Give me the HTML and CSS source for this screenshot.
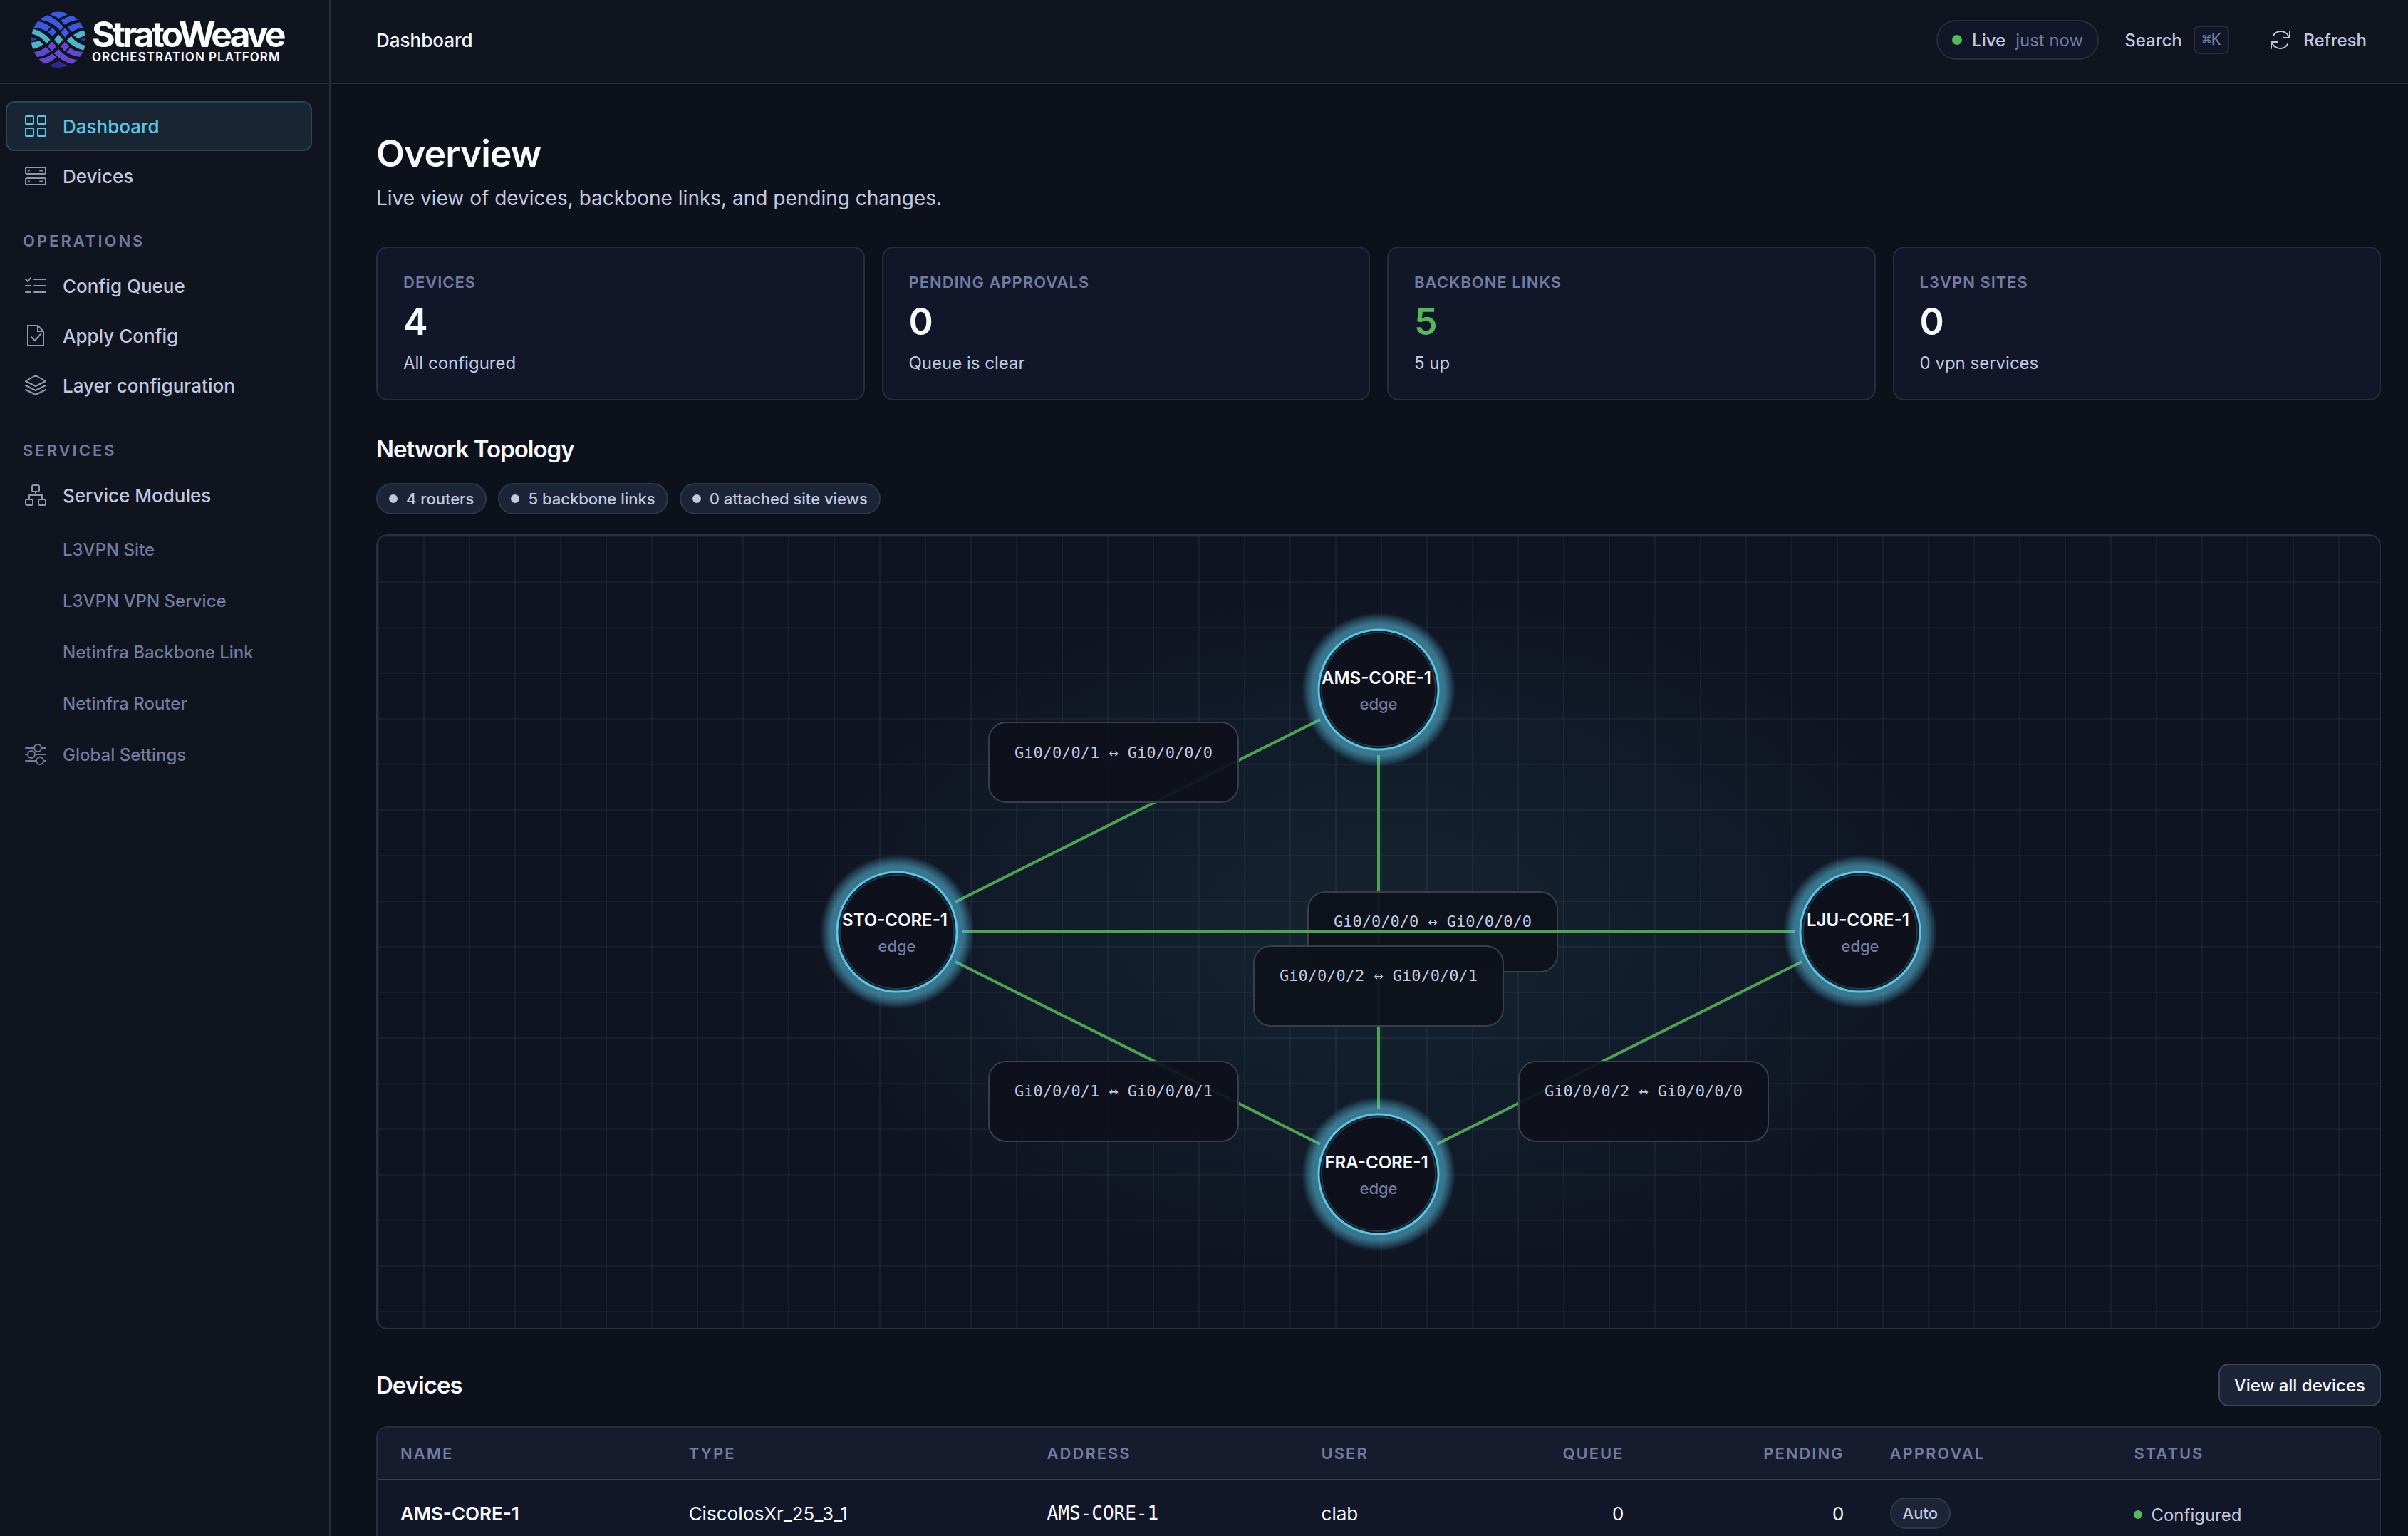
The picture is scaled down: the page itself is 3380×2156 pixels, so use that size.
FILE: index.html
```html
<!DOCTYPE html>
<html lang="en">
<head>
<meta charset="utf-8">
<title>StratoWeave – Dashboard</title>
<link rel="stylesheet" href="styles.css">
</head>
<body>
<div class="shell">
  <aside class="sidebar">
    <a class="brand" href="#" aria-label="StratoWeave Orchestration Platform">
      <svg class="brand-mark" viewBox="16 15 234 240" aria-hidden="true">
        <defs>
          <clipPath id="disc"><ellipse cx="133" cy="134" rx="115" ry="118"/></clipPath>
        </defs>
        <g clip-path="url(#disc)">
          <g fill="#3a5ae6">
            <path d="M94 26Q134 6 174 26L135 44Z"/>
            <path d="M60 44L88 31Q122 44 155 80L142 96Q108 58 60 50Z"/>
            <path d="M143 52Q166 37 196 32L216 50Q182 54 159 71Z"/>
            <path d="M44 56Q76 60 99 80L84 100Q60 84 26 84Z"/>
            <path d="M228 60L240 84Q212 86 190 102L171 81Q196 64 228 60Z"/>
            <path d="M108 83L125 102L108 121L90 102Z"/>
            <path d="M160 85L178 104L160 125L143 104Z"/>
          </g>
          <g fill="#4fb3c9">
            <path d="M28 89Q68 98 99 135L83 151Q55 115 18 109Z"/>
            <path d="M18 146Q38 144 52 138L69 154Q50 170 24 174Z"/>
            <path d="M246 94L250 116Q230 121 216 131L196 115Q216 99 246 94Z"/>
            <path d="M186 119Q215 156 250 158L242 179Q202 172 168 138Z"/>
            <path d="M133 112L152 134L134 156L116 134Z"/>
          </g>
          <g fill="#6446d0">
            <path d="M106 142L125 162L106 182L88 162Z"/>
            <path d="M160 143L179 162L160 184L142 162Z"/>
            <path d="M30 186Q62 182 80 164L100 184Q76 204 40 208Z"/>
            <path d="M50 217Q84 212 107 193L125 208Q104 228 72 238Z"/>
            <path d="M133 173Q170 216 216 220L196 238Q150 228 114 192Z"/>
            <path d="M183 169Q206 186 238 186L228 208Q192 204 167 187Z"/>
          </g>
          <path fill="#33268c" d="M90 246L134 224L178 246Q134 264 90 246Z"/>
          <path fill="#2b3fa8" d="M16 122L43 133L16 144ZM252 124L225 134L252 144Z"/>
        </g>
      </svg>
      <span class="brand-text">
        <span class="brand-name">StratoWeave</span>
        <span class="brand-tag">ORCHESTRATION PLATFORM</span>
      </span>
    </a>
    <nav class="nav">
      <a class="nav-item active" href="#">
        <svg class="icon" viewBox="0 0 32 32"><rect x="2" y="2" width="11" height="11" rx="1"/><rect x="19" y="2" width="11" height="11" rx="1"/><rect x="2" y="19" width="11" height="11" rx="1"/><rect x="19" y="19" width="11" height="11" rx="1"/></svg>
        Dashboard</a>
      <a class="nav-item" href="#">
        <svg class="icon" viewBox="0 0 32 32"><rect x="2" y="4" width="28" height="9" rx="2"/><rect x="2" y="19" width="28" height="9" rx="2"/><path d="M6 8.500h1M22 8.500h4M6 23.500h1M22 23.500h4"/></svg>
        Devices</a>
      <h2 class="nav-label">Operations</h2>
      <a class="nav-item" href="#">
        <svg class="icon" viewBox="0 0 32 32"><path d="M2 7l3 3 4-5M14 7h16M2 16h7M14 16h16M2 25h7M14 25h16"/></svg>
        Config Queue</a>
      <a class="nav-item" href="#">
        <svg class="icon sharp" viewBox="0 0 32 32"><path d="M5 2h14l8 8v20H5zM19 2v8h8M10 18l5 5 8-9"/></svg>
        Apply Config</a>
      <a class="nav-item" href="#">
        <svg class="icon" viewBox="0 0 32 32"><path d="M16 2l14 8-14 7-14-7zM2 16l14 7 14-7M2 22l14 7 14-7"/></svg>
        Layer configuration</a>
      <h2 class="nav-label">Services</h2>
      <a class="nav-item" href="#">
        <svg class="icon" viewBox="0 0 32 32"><rect x="11" y="2" width="10" height="9" rx="2"/><rect x="2" y="22" width="10" height="8" rx="2"/><rect x="20" y="22" width="10" height="8" rx="2"/><path d="M16 11v5M7 22v-6h18v6"/></svg>
        Service Modules</a>
      <div class="subnav">
        <a class="nav-sub" href="#">L3VPN Site</a>
        <a class="nav-sub" href="#">L3VPN VPN Service</a>
        <a class="nav-sub" href="#">Netinfra Backbone Link</a>
        <a class="nav-sub" href="#">Netinfra Router</a>
        <a class="nav-sub with-icon" href="#">
          <svg class="icon" viewBox="0 0 32 32"><circle cx="19" cy="7" r="5"/><circle cx="10" cy="16" r="5"/><circle cx="22" cy="25" r="5"/><path d="M2 7h12M24 7h6M2 16h3M15 16h15M2 25h15M27 25h3"/></svg>
          Global Settings</a>
      </div>
    </nav>
  </aside>

  <div class="page">
    <header class="topbar">
      <span class="crumb">Dashboard</span>
      <div class="actions">
        <div class="live"><span class="dot"></span><span>Live</span><span class="muted">just now</span></div>
        <button class="action search" type="button">Search <kbd>⌘K</kbd></button>
        <button class="action refresh" type="button">
          <svg class="icon" viewBox="0 0 32 32"><path d="M6 10A12 12 0 0 1 28 13M29 4v9H20M26 22A12 12 0 0 1 4 19M3 28V19h9"/></svg>
          Refresh</button>
      </div>
    </header>

    <main class="content">
      <h1>Overview</h1>
      <p class="lead">Live view of devices, backbone links, and pending changes.</p>

      <section class="stats">
        <article class="card"><h3>Devices</h3><p class="value">4</p><p class="note">All configured</p></article>
        <article class="card"><h3>Pending approvals</h3><p class="value">0</p><p class="note">Queue is clear</p></article>
        <article class="card"><h3>Backbone links</h3><p class="value good">5</p><p class="note">5 up</p></article>
        <article class="card"><h3>L3VPN sites</h3><p class="value">0</p><p class="note">0 vpn services</p></article>
      </section>

      <h2 class="section-title">Network Topology</h2>
      <div class="pills">
        <span class="pill"><i></i>4 routers</span>
        <span class="pill"><i></i>5 backbone links</span>
        <span class="pill"><i></i>0 attached site views</span>
      </div>

      <div class="topology">
        <svg viewBox="0 0 2810 1112" role="img" aria-label="Network topology">
          <defs>
            <radialGradient id="halo" gradientUnits="userSpaceOnUse" cx="0" cy="0" r="108">
              <stop offset=".78" stop-color="#5bc8e8" stop-opacity=".55"/>
              <stop offset=".86" stop-color="#5bc8e8" stop-opacity=".52"/>
              <stop offset=".93" stop-color="#5bc8e8" stop-opacity=".28"/>
              <stop offset="1" stop-color="#5bc8e8" stop-opacity="0"/>
            </radialGradient>
            <g id="node">
              <circle class="node-halo" r="108"/>
              <circle class="node-ring" r="84"/>
              <circle class="node-inner" r="80"/>
            </g>
            <rect id="tag" class="tag" x="-175" y="-56" width="350" height="112" rx="24"/>
          </defs>
          <path class="link" d="M811 514L1323 258"/>
          <use href="#tag" x="1033" y="318"/><text class="port" x="1033" y="312">Gi0/0/0/1 ↔ Gi0/0/0/0</text>
          <path class="link" d="M811 598L1323 854"/>
          <use href="#tag" x="1033" y="794"/><text class="port" x="1033" y="787">Gi0/0/0/1 ↔ Gi0/0/0/1</text>
          <path class="link" d="M1405 308V804"/>
          <use href="#tag" x="1481" y="556"/><text class="port" x="1481" y="549">Gi0/0/0/0 ↔ Gi0/0/0/0</text>
          <path class="link" d="M821 556H1989"/>
          <use href="#tag" x="1405" y="632"/><text class="port" x="1405" y="625">Gi0/0/0/2 ↔ Gi0/0/0/1</text>
          <path class="link" d="M1999 598L1487 854"/>
          <use href="#tag" x="1777" y="794"/><text class="port" x="1777" y="787">Gi0/0/0/2 ↔ Gi0/0/0/0</text>

          <use href="#node" x="1405" y="216"/><text class="node-name" x="1402" y="208">AMS-CORE-1</text><text class="node-role" x="1405" y="244">edge</text>
          <use href="#node" x="729" y="556"/><text class="node-name" x="726" y="548">STO-CORE-1</text><text class="node-role" x="729" y="584">edge</text>
          <use href="#node" x="2081" y="556"/><text class="node-name" x="2078" y="548">LJU-CORE-1</text><text class="node-role" x="2081" y="584">edge</text>
          <use href="#node" x="1405" y="896"/><text class="node-name" x="1402" y="888">FRA-CORE-1</text><text class="node-role" x="1405" y="924">edge</text>
        </svg>
      </div>

      <div class="section-head">
        <h2 class="section-title">Devices</h2>
        <button class="button" type="button">View all devices</button>
      </div>
      <div class="table-wrap">
        <table>
          <colgroup><col class="c-name"><col class="c-type"><col class="c-addr"><col class="c-user"><col class="c-queue"><col class="c-pend"><col class="c-appr"><col></colgroup>
          <thead><tr><th>Name</th><th>Type</th><th>Address</th><th>User</th><th class="num">Queue</th><th class="num">Pending</th><th>Approval</th><th>Status</th></tr></thead>
          <tbody><tr><td class="strong">AMS-CORE-1</td><td>CiscoIosXr_25_3_1</td><td class="mono">AMS-CORE-1</td><td>clab</td><td class="num">0</td><td class="num">0</td><td><span class="pill">Auto</span></td><td><span class="status"><span class="dot"></span>Configured</span></td></tr></tbody>
        </table>
      </div>
    </main>
  </div>
</div>
</body>
</html>
```
FILE: styles.css
```css
:root {
  --bg: #0d111c;
  --panel: #10141f;
  --card: #111628;
  --raised: #1c2438;
  --line: #292d3a;
  --text: #f8faff;
  --soft: #c0c8e0;
  --muted: #727ca0;
  --accent: #5bc8e8;
  --good: #56b959;
  --mono: "DejaVu Sans Mono", monospace;
}

* { box-sizing: border-box; }

body {
  margin: 0;
  background: var(--bg);
  color: var(--text);
  font-family: Inter, sans-serif;
  font-size: 26px;
}

h1, h2, h3, p { margin: 0; }
a { color: inherit; text-decoration: none; }
button { font: inherit; color: inherit; border: 0; background: none; padding: 0; }

.shell { display: flex; height: 100vh; overflow: hidden; }

.icon {
  width: 32px;
  height: 32px;
  flex: none;
  fill: none;
  stroke: currentColor;
  stroke-width: 2;
  stroke-linecap: round;
  stroke-linejoin: round;
}
.icon.sharp { stroke-linejoin: miter; }

/* Sidebar */
.sidebar {
  flex: none;
  width: 464px;
  background: var(--panel);
  border-right: 2px solid var(--line);
}

.brand {
  display: flex;
  align-items: center;
  gap: 8px;
  height: 118px;
  padding: 0 0 4px 43px;
  border-bottom: 2px solid var(--line);
}
.brand-mark { width: 78px; height: 80px; flex: none; }
.brand-text { display: flex; flex-direction: column; color: #fff; }
.brand-name { font-size: 50px; line-height: 48px; font-weight: 700; letter-spacing: -4px; }
.brand-tag { font-size: 17px; line-height: 16px; font-weight: 600; letter-spacing: 1px; white-space: nowrap; }

.nav { padding: 24px 24px 0 8px; }
.nav-item, .nav-sub {
  display: flex;
  align-items: center;
  gap: 22px;
  color: var(--soft);
}
.nav-item {
  height: 70px;
  padding-left: 24px;
  border: 2px solid transparent;
  border-radius: 12px;
  font-weight: 500;
}
.nav-item .icon { color: #9297ab; }
.nav-item.active { background: #1a2533; border-color: #26475a; color: var(--accent); }
.nav-item.active .icon { color: var(--accent); }
.nav-label {
  padding: 40px 0 12px 24px;
  font-size: 22px;
  line-height: 32px;
  font-weight: 600;
  letter-spacing: 3px;
  text-transform: uppercase;
  color: var(--muted);
}
.subnav { padding-top: 5px; }
.nav-sub { height: 72px; padding-left: 80px; font-size: 24px; font-weight: 500; color: var(--muted); }
.nav-sub.with-icon { padding-left: 26px; }

/* Top bar */
.page { flex: 1; min-width: 0; }
.topbar {
  display: flex;
  justify-content: space-between;
  align-items: center;
  height: 118px;
  padding: 0 58px 4px 64px;
  background: var(--panel);
  border-bottom: 2px solid var(--line);
}
.crumb { font-weight: 500; }
.actions { display: flex; align-items: center; font-size: 24px; font-weight: 500; color: var(--soft); }
.live {
  display: flex;
  align-items: center;
  gap: 14px;
  height: 56px;
  padding: 0 20px;
  border: 2px solid var(--line);
  border-radius: 28px;
  background: var(--card);
}
.muted { color: var(--muted); font-weight: 400; }
.dot { width: 14px; height: 14px; border-radius: 50%; background: var(--good); flex: none; }
.action { display: flex; align-items: center; gap: 16px; }
.search { margin-left: 36px; }
.refresh { margin-left: 56px; }
kbd {
  height: 40px;
  padding: 0 10px;
  border: 2px solid var(--line);
  border-radius: 8px;
  background: var(--card);
  color: var(--muted);
  font: 22px/36px var(--mono);
}

/* Content */
.content { padding: 64px 38px 0 64px; }
h1 { font-size: 52px; line-height: 68px; font-weight: 600; letter-spacing: -1px; }
.lead { margin-top: 8px; font-size: 28px; line-height: 40px; color: var(--soft); }

.stats { display: grid; grid-template-columns: repeat(4, 1fr); gap: 24px; margin-top: 48px; }
.card {
  min-height: 216px;
  padding: 32px 36px 24px;
  border: 2px solid var(--line);
  border-radius: 16px;
  background: var(--card);
}
h3, th {
  font-size: 22px;
  font-weight: 600;
  text-transform: uppercase;
  color: var(--muted);
}
h3 { line-height: 32px; letter-spacing: 1px; }
.value { font-size: 52px; line-height: 60px; margin-top: 10px; font-weight: 600; }
.value.good { color: var(--good); }
.note { font-size: 24px; line-height: 32px; margin-top: 12px; color: var(--soft); }

.section-title { font-size: 33px; line-height: 44px; font-weight: 600; letter-spacing: -1px; }
.stats + .section-title { margin-top: 46px; }
.pills { display: flex; gap: 16px; margin: 26px 0 28px; }
.pill {
  display: inline-flex;
  align-items: center;
  gap: 12px;
  height: 44px;
  padding: 0 16px;
  border: 2px solid #2e374b;
  border-radius: 22px;
  background: var(--raised);
  color: var(--soft);
  font-size: 22px;
  font-weight: 500;
}
.pill i { width: 12px; height: 12px; border-radius: 50%; background: currentColor; }

/* Topology */
.topology {
  border: 2px solid #2b3040;
  border-radius: 16px;
  overflow: hidden;
  background:
    linear-gradient(rgba(255, 255, 255, .042) 2px, transparent 2px) 0 0 / 64px 64px,
    linear-gradient(90deg, rgba(255, 255, 255, .042) 2px, transparent 2px) 0 0 / 64px 64px,
    radial-gradient(ellipse 31% 46% at center, #152431 0%, #111b2a 60%, #101320 100%);
}
.topology svg { display: block; width: 100%; height: auto; }
.link { fill: none; stroke: #4ca352; stroke-width: 4; }
.tag { fill: #0e111b; fill-opacity: .94; stroke: #3a3e4a; stroke-width: 2; }
.topology text { text-anchor: middle; }
.port { fill: var(--soft); font: 22px var(--mono); }
.node-halo { fill: url(#halo); }
.node-ring { fill: #0e111c; stroke: var(--accent); stroke-width: 3; }
.node-inner { fill: none; stroke: #1e3c4b; stroke-width: 2; }
.node-name { fill: var(--text); font-size: 24px; font-weight: 600; }
.node-role { fill: var(--muted); font-size: 22px; font-weight: 500; }

/* Devices table */
.section-head { display: flex; justify-content: space-between; align-items: center; margin: 48px 0 28px; }
.button {
  height: 60px;
  padding: 0 20px;
  border: 2px solid #3b4458;
  border-radius: 14px;
  background: var(--raised);
  font-size: 24px;
  font-weight: 500;
}
.table-wrap { border: 2px solid var(--line); border-radius: 16px; overflow: hidden; background: var(--card); }
table { width: 100%; border-collapse: separate; border-spacing: 0; table-layout: fixed; }
.c-name { width: 14.4%; }
.c-type { width: 17.9%; }
.c-addr { width: 13.7%; }
.c-user { width: 9.1%; }
.c-queue { width: 8.3%; }
.c-pend { width: 11%; }
.c-appr { width: 12.2%; }
th, td { padding: 0 32px; text-align: left; }
th { height: 74px; letter-spacing: 2px; background: #161b2d; border-bottom: 2px solid #3a3f54; }
td { height: 92px; }
.num { text-align: right; font-variant-numeric: tabular-nums; }
.strong { font-weight: 600; }
.mono { font-family: var(--mono); }
.status { display: inline-flex; align-items: center; gap: 12px; font-size: 24px; color: var(--soft); }
.status .dot { width: 12px; height: 12px; }
```
